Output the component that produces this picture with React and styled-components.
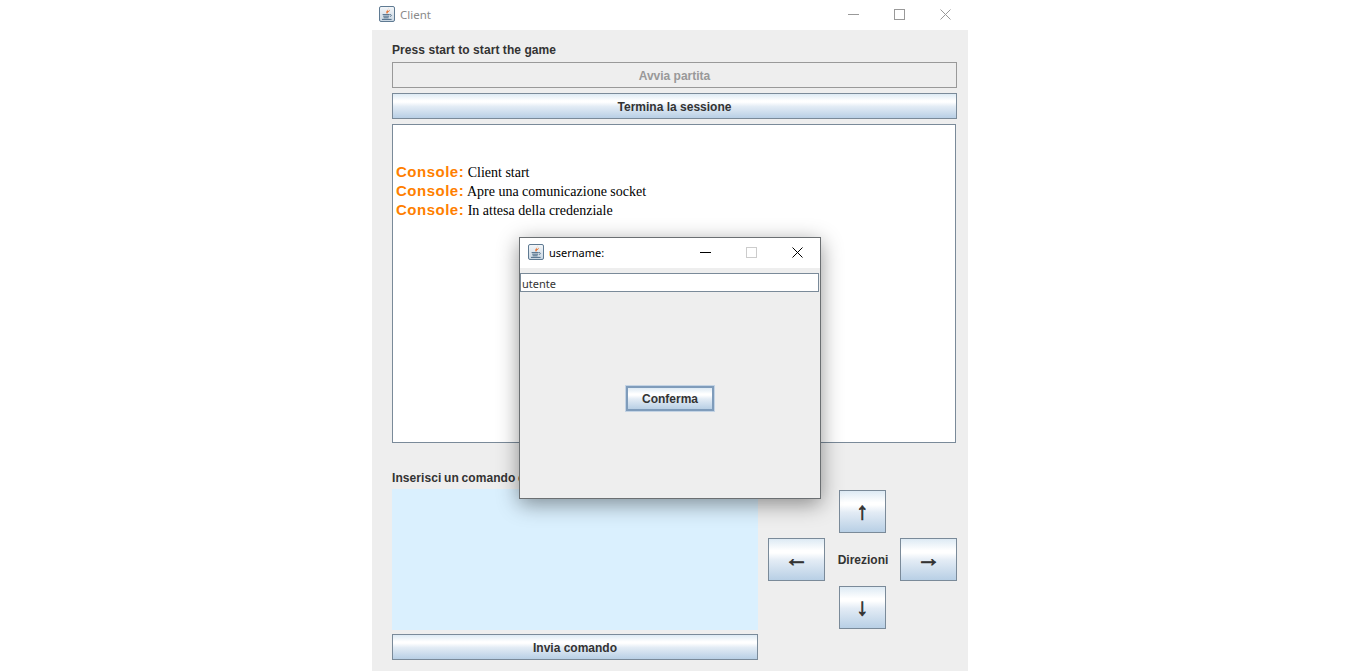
import React from 'react'
import styled, { createGlobalStyle } from 'styled-components'

const GlobalStyle = createGlobalStyle`
  html, body {
    margin: 0;
    padding: 0;
    height: 671px;
    overflow: hidden;
    background: #ffffff;
    font-family: "Liberation Sans", Arial, sans-serif;
  }
`

const JavaIcon = () => (
  <svg width='16' height='16' viewBox='0 0 16 16'>
    <defs>
      <linearGradient id='java-bg' x1='0' y1='0' x2='0' y2='1'>
        <stop offset='0' stopColor='#f4f7fa' />
        <stop offset='1' stopColor='#c9d6e2' />
      </linearGradient>
    </defs>
    <rect x='0.5' y='0.5' width='15' height='15' rx='1.5' fill='url(#java-bg)' stroke='#5f7a92' />
    <path d='M9.6 1.6c.8 2-2.8 3-2.2 5.2.1.5.4.9.8 1.2-.2-1.2 1-1.8 2-2.7.6-.6.8-1.2.5-1.9-.3 1-1.5 1.4-2.1 2.2-.2-1.2 1.1-2.4 1-4z' fill='#e8661d' />
    <path d='M3.6 8.6h7M4.2 10.2h6M4.6 11.8h5M3 13.4h9.6' stroke='#4f6d88' strokeWidth='1' fill='none' />
    <path d='M10.8 8.6c1.8-.4 2.4 1.5.2 1.9' stroke='#4f6d88' strokeWidth='0.9' fill='none' />
  </svg>
)

const MinimizeIcon = ({ color }) => (
  <svg width='11' height='11' viewBox='0 0 11 11'>
    <path d='M0 5.5h11' stroke={color} strokeWidth='1' />
  </svg>
)

const MaximizeIcon = ({ color }) => (
  <svg width='11' height='11' viewBox='0 0 11 11'>
    <rect x='0.5' y='0.5' width='10' height='10' fill='none' stroke={color} strokeWidth='1' />
  </svg>
)

const CloseIcon = ({ color }) => (
  <svg width='11' height='11' viewBox='0 0 11 11'>
    <path d='M0.5 0.5l10 10M10.5 0.5l-10 10' stroke={color} strokeWidth='1' />
  </svg>
)

const Page = styled.div`
  position: relative;
  width: 1367px;
  height: 671px;
  overflow: hidden;
  padding-left: 372px;
  box-sizing: border-box;
`

const Window = styled.div`
  width: 596px;
  height: 671px;
  display: flex;
  flex-direction: column;
  background: #eeeeee;
`

const TitleBar = styled.div`
  box-sizing: border-box;
  height: 30px;
  flex: none;
  background: #ffffff;
  display: flex;
  align-items: center;
  padding: 0 0 2px 7px;
`

const TitleText = styled.span`
  margin-left: 5px;
  font-family: "Noto Sans", "Open Sans", sans-serif;
  font-size: ${(p) => p.$size}px;
  color: ${(p) => p.$color};
`

const TitleButtons = styled.div`
  margin-left: auto;
  display: flex;
  align-items: center;
`

const TitleButton = styled.div`
  width: 46px;
  height: 28px;
  display: flex;
  align-items: center;
  justify-content: center;
`

const Content = styled.div`
  flex: 1;
  display: flex;
  flex-direction: column;
  padding: 0 11px 0 20px;
`

const Label = styled.div`
  font-size: 12px;
  font-weight: bold;
  line-height: 14px;
  color: #333333;
`

const TopLabel = styled(Label)`
  margin: 13px 0 5px;
  letter-spacing: 0.07px;
`

const MetalButton = styled.div`
  box-sizing: border-box;
  height: ${(p) => p.$height || 26}px;
  padding-top: 1px;
  border: 1px solid #7a8a99;
  background: linear-gradient(#ddeaf4 0%, #ffffff 28%, #ffffff 34%, #e3ecf5 52%, #b8cfe5 100%);
  display: flex;
  align-items: center;
  justify-content: center;
  font-size: 12px;
  font-weight: bold;
  color: #333333;
`

const DisabledButton = styled(MetalButton)`
  border-color: #999999;
  background: #eeeeee;
  color: #999999;
`

const SessionButton = styled(MetalButton)`
  margin-top: 5px;
`

const Console = styled.div`
  box-sizing: border-box;
  width: 564px;
  height: 319px;
  margin-top: 5px;
  padding: 37px 3px 0;
  background: #ffffff;
  border: 1px solid #7a8a99;
`

const ConsoleLine = styled.div`
  height: 19px;
  line-height: 19px;
  font-family: "Liberation Serif", "Times New Roman", serif;
  font-size: 14px;
  color: #000000;
  white-space: nowrap;
`

const ConsoleTag = styled.span`
  font-family: "Liberation Sans", Arial, sans-serif;
  font-size: 15px;
  letter-spacing: 0.5px;
  font-weight: bold;
  color: #ff7f00;
`

const CommandLabel = styled(Label)`
  margin: 28px 0 4px;
  letter-spacing: 0.07px;
  word-spacing: -0.7px;
`

const BottomRow = styled.div`
  display: flex;
  gap: 10px;
`

const CommandColumn = styled.div`
  width: 366px;
  display: flex;
  flex-direction: column;
  gap: 4px;
`

const CommandArea = styled.div`
  height: 141px;
  background: #daf0fe;
`

const Directions = styled.div`
  margin-top: 1px;
  width: 189px;
  display: grid;
  grid-template-columns: 57px 47px 57px;
  grid-template-rows: 43px 43px 43px;
  column-gap: 14px;
  row-gap: 5px;
`

const ArrowButton = styled(MetalButton)`
  grid-column: ${(p) => p.$col};
  grid-row: ${(p) => p.$row};
  height: 43px;
  padding-top: 0;
  padding-bottom: ${(p) => (p.$row === 2 ? 4 : 2)}px;
  font-size: 24px;
  font-weight: normal;
  -webkit-text-stroke: 0.8px #333333;
`

const DirectionLabel = styled(Label)`
  grid-column: 2;
  grid-row: 2;
  justify-self: center;
  align-self: center;
  text-align: center;
  white-space: nowrap;
  margin-left: 1px;
`

const Dialog = styled.div`
  position: absolute;
  left: 519px;
  top: 237px;
  box-sizing: border-box;
  width: 302px;
  height: 262px;
  display: flex;
  flex-direction: column;
  background: #eeeeee;
  border: 1px solid #6b6f72;
  box-shadow: 0 5px 20px rgba(0, 0, 0, 0.42);
`

const DialogTitleBar = styled.div`
  box-sizing: border-box;
  height: 30px;
  flex: none;
  background: #ffffff;
  display: flex;
  align-items: center;
  padding: 0 0 2px 8px;
`

const DialogButtons = styled.div`
  margin-left: auto;
  display: flex;
  align-items: center;
`

const DialogTitleButton = styled.div`
  width: 46px;
  height: 28px;
  display: flex;
  align-items: center;
  justify-content: center;
`

const UserInput = styled.div`
  box-sizing: border-box;
  height: 19px;
  margin: 5px 1px 0 0;
  padding-left: 1px;
  background: #ffffff;
  border: 1px solid #7a8a99;
  font-family: "Noto Sans", "Open Sans", sans-serif;
  font-size: 11px;
  line-height: 19px;
  color: #333333;
`

const DialogBody = styled.div`
  flex: 1;
  display: flex;
  justify-content: center;
  padding-top: 94px;
`

const ConfirmButton = styled(MetalButton)`
  width: 88px;
  height: 25px;
  border: 2px solid #7f9cbb;
  box-shadow: 0 0 0 1px #c3d3e4;
`

const lines = ['Client start', 'Apre una comunicazione socket', 'In attesa della credenziale']

export default function App () {
  return (
    <Page>
      <GlobalStyle />
      <Window>
        <TitleBar>
          <JavaIcon />
          <TitleText $color='#8a8a8a' $size={11.5}>Client</TitleText>
          <TitleButtons>
            <TitleButton><MinimizeIcon color='#999999' /></TitleButton>
            <TitleButton><MaximizeIcon color='#999999' /></TitleButton>
            <TitleButton><CloseIcon color='#999999' /></TitleButton>
          </TitleButtons>
        </TitleBar>
        <Content>
          <TopLabel>Press start to start the game</TopLabel>
          <DisabledButton>Avvia partita</DisabledButton>
          <SessionButton>Termina la sessione</SessionButton>
          <Console>
            {lines.map((line) => (
              <ConsoleLine key={line}>
                <ConsoleTag>Console:</ConsoleTag> {line}
              </ConsoleLine>
            ))}
          </Console>
          <CommandLabel>Inserisci un comando da eseguire</CommandLabel>
          <BottomRow>
            <CommandColumn>
              <CommandArea />
              <MetalButton>Invia comando</MetalButton>
            </CommandColumn>
            <Directions>
              <ArrowButton $col={2} $row={1}>↑</ArrowButton>
              <ArrowButton $col={1} $row={2}>←</ArrowButton>
              <DirectionLabel>Direzioni</DirectionLabel>
              <ArrowButton $col={3} $row={2}>→</ArrowButton>
              <ArrowButton $col={2} $row={3}>↓</ArrowButton>
            </Directions>
          </BottomRow>
        </Content>
      </Window>
      <Dialog>
        <DialogTitleBar>
          <JavaIcon />
          <TitleText $color='#000000' $size={11}>username:</TitleText>
          <DialogButtons>
            <DialogTitleButton><MinimizeIcon color='#000000' /></DialogTitleButton>
            <DialogTitleButton><MaximizeIcon color='#cccccc' /></DialogTitleButton>
            <DialogTitleButton><CloseIcon color='#000000' /></DialogTitleButton>
          </DialogButtons>
        </DialogTitleBar>
        <UserInput>utente</UserInput>
        <DialogBody>
          <ConfirmButton>Conferma</ConfirmButton>
        </DialogBody>
      </Dialog>
    </Page>
  )
}
